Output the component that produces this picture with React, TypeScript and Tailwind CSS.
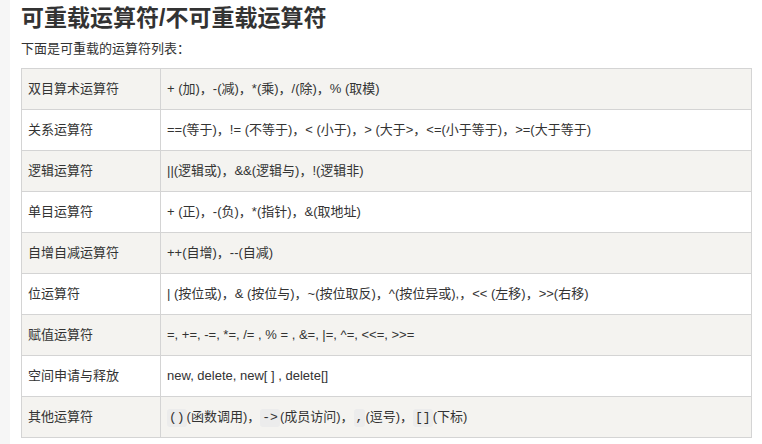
const rows: { name: string; ops: React.ReactNode }[] = [
  { name: "双目算术运算符", ops: "+ (加)，-(减)，*(乘)，/(除)，% (取模)" },
  {
    name: "关系运算符",
    ops: "==(等于)，!= (不等于)，< (小于)，> (大于>，<=(小于等于)，>=(大于等于)",
  },
  { name: "逻辑运算符", ops: "||(逻辑或)，&&(逻辑与)，!(逻辑非)" },
  { name: "单目运算符", ops: "+ (正)，-(负)，*(指针)，&(取地址)" },
  { name: "自增自减运算符", ops: "++(自增)，--(自减)" },
  {
    name: "位运算符",
    ops: "| (按位或)，& (按位与)，~(按位取反)，^(按位异或),，<< (左移)，>>(右移)",
  },
  { name: "赋值运算符", ops: "=, +=, -=, *=, /= , % = , &=, |=, ^=, <<=, >>=" },
  { name: "空间申请与释放", ops: "new, delete, new[ ] , delete[]" },
  { name: "其他运算符", ops: null },
];

function Code({ children }: { children: React.ReactNode }) {
  return (
    <code className="inline-block rounded-[3px] bg-[#ececec] px-[2px] font-['Liberation_Mono',monospace] text-[13px] leading-[18px] text-[#333]">
      {children}
    </code>
  );
}

export default function App() {
  return (
    <div className="flex h-[444px] w-[762px] bg-white font-['Liberation_Sans','Noto_Sans_CJK_SC',sans-serif] text-[#333]">
      <div className="w-[10px] shrink-0 bg-[#f6f6f6]" />
      <div className="pl-[11px]">
        <h1 className="pt-[2px] text-[23px] font-bold leading-[32px] text-[#333]">
          可重载运算符/不可重载运算符
        </h1>
        <p className="mt-[5px] text-[13px] leading-[20px]">下面是可重载的运算符列表：</p>
        <table className="mt-[9px] w-[731px] border-collapse border border-[#d4d4d4] text-[13px]">
          <tbody>
            {rows.map((row, i) => (
              <tr key={row.name} className={i % 2 === 0 ? "bg-[#f4f3f0]" : "bg-white"}>
                <td className="h-[41px] w-[139px] border border-[#d4d4d4] px-[6px] align-middle">
                  {row.name}
                </td>
                <td className="h-[41px] border border-[#d4d4d4] px-[6px] align-middle">
                  {row.ops ?? (
                    <span>
                      <Code>()</Code>(函数调用)，<Code>-&gt;</Code>(成员访问)，<Code>,</Code>(逗号)，
                      <Code>[]</Code>(下标)
                    </span>
                  )}
                </td>
              </tr>
            ))}
          </tbody>
        </table>
      </div>
    </div>
  );
}
